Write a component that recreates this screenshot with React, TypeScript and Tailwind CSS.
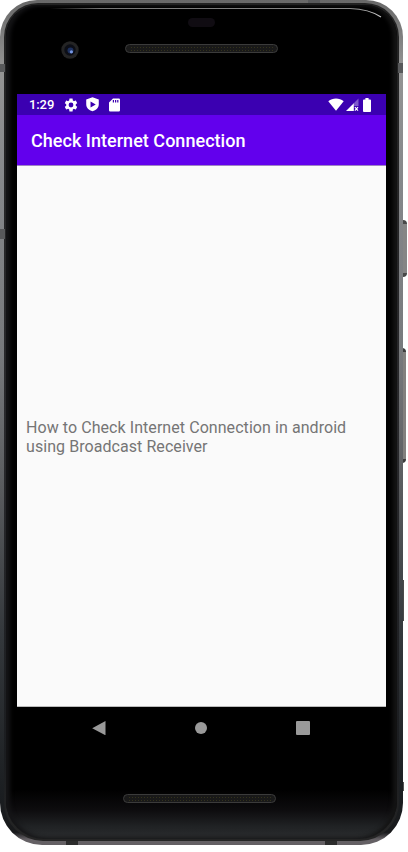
function StatusBar() {
  return (
    <div className="flex h-[21px] shrink-0 items-center bg-[#3b00b1] pl-3 pr-[14px] text-white">
      <span className="w-[26px] text-[13px] leading-[21px] font-medium tracking-[-0.1px] whitespace-nowrap">1:29</span>
      <svg className="ml-2 size-4" viewBox="0 0 24 24" fill="currentColor">
        <path d="M19.14 12.94c.04-.3.06-.61.06-.94 0-.32-.02-.64-.07-.94l2.03-1.58c.18-.14.23-.41.12-.61l-1.92-3.32c-.12-.22-.37-.29-.59-.22l-2.39.96c-.5-.38-1.03-.7-1.62-.94l-.36-2.54c-.04-.24-.24-.41-.48-.41h-3.84c-.24 0-.43.17-.47.41l-.36 2.54c-.59.24-1.13.57-1.62.94l-2.39-.96c-.22-.08-.47 0-.59.22L2.74 8.87c-.12.21-.08.47.12.61l2.03 1.58c-.05.3-.09.63-.09.94s.02.64.07.94l-2.03 1.58c-.18.14-.23.41-.12.61l1.92 3.32c.12.22.37.29.59.22l2.39-.96c.5.38 1.03.7 1.62.94l.36 2.54c.05.24.24.41.48.41h3.84c.24 0 .44-.17.47-.41l.36-2.54c.59-.24 1.13-.56 1.62-.94l2.39.96c.22.08.47 0 .59-.22l1.92-3.32c.12-.22.07-.47-.12-.61zM12 15.6A3.6 3.6 0 1 1 12 8.4a3.6 3.6 0 0 1 0 7.2z" />
      </svg>
      <svg className="ml-[7px] h-[15px] w-[13px]" viewBox="0 0 12 15" preserveAspectRatio="none" fill="currentColor">
        <path fillRule="evenodd" d="M6 0.3 11.8 2.5V7.3C11.8 10.7 9.4 13.4 6 14.3 2.6 13.4.2 10.7.2 7.3V2.5zM4.2 4.4v6L9 7.4z" />
      </svg>
      <svg className="ml-[10px] h-[14px] w-[11px]" viewBox="0 0 11 14" fill="currentColor">
        <path fillRule="evenodd" d="M4 .5h5.8A1.2 1.2 0 0 1 11 1.7v10.6a1.2 1.2 0 0 1-1.2 1.2H1.2A1.2 1.2 0 0 1 0 12.3V4.6zM3.8 2v2.6H5V2zM6 2v2.6h1.2V2zM8.2 2v2.6h1.2V2z" />
      </svg>
      <svg className="ml-auto h-[13px] w-4" viewBox="0 0 16 13" fill="currentColor">
        <path d="M.3 3.2C2.5 1.3 5.2.4 8 .4s5.5.9 7.7 2.8L8 12.8z" />
      </svg>
      <svg className="ml-[2px] h-[13px] w-[13px]" viewBox="0 0 13 13" fill="currentColor">
        <path d="M0 13 7.8 5.2V13z" />
        <path d="M7.8 5.2 12.5.5V8H7.8z" opacity=".35" />
        <path d="m8.9 9.2 3.1 3.4m0-3.4-3.1 3.4" stroke="currentColor" strokeWidth="1.2" />
      </svg>
      <svg className="mr-[1px] ml-[4px] h-[14px] w-2" viewBox="0 0 8 14" fill="currentColor">
        <path d="M2.4 0h3.2v1.4H7a1 1 0 0 1 1 1V13a.9.9 0 0 1-.9.9H.9A.9.9 0 0 1 0 13V2.4a1 1 0 0 1 1-1h1.4z" />
      </svg>
    </div>
  );
}

function Grille() {
  return (
    <div className="flex h-[9px] w-[153px] items-center rounded-full border border-[#3b3b3b] bg-[#191919] px-1">
      <div className="h-[5px] w-full bg-[radial-gradient(#33321c_0.8px,transparent_1px)] bg-[length:3px_3px]" />
    </div>
  );
}

function TopBezel() {
  return (
    <div className="flex h-[89px] shrink-0 flex-col pt-[13px] pl-[55px]">
      <div className="ml-[127px] h-[9px] w-[27px] rounded-full bg-[#100c12]" />
      <div className="mt-[14px] flex items-start gap-[46px]">
        <svg className="size-[18px]" viewBox="0 0 18 18">
          <circle cx="9" cy="9" r="8.7" fill="#242424" />
          <circle cx="9" cy="9" r="5.7" fill="#0c0e16" />
          <circle cx="9.5" cy="9.5" r="3" fill="#1d305e" />
          <circle cx="10.4" cy="10.8" r="1.6" fill="#7898e4" />
        </svg>
        <div className="pt-[3px]"><Grille /></div>
      </div>
    </div>
  );
}

function SideKeys() {
  return (
    <div className="-ml-px flex w-[5px] flex-col items-start">
      <div className="mt-[220px] ml-px h-[57px] w-1 rounded-r-sm border-y-4 border-[#484848] bg-[#858585]" />
      <div className="mt-[71px] h-[115px] w-1 rounded-r-sm border-y-4 border-[#3c3c3c] bg-[#82807e]" />
      <div className="mt-[117px] h-[41px] w-[2px] bg-[#4a4a4a]" />
      <div className="mt-[161px] h-[9px] w-[2px] bg-[#555]" />
    </div>
  );
}

/* Antenna breaks and the highlight along the top of the glass. */
function FrameDetails() {
  return (
    <svg className="absolute inset-0 size-full" viewBox="0 0 403 845" fill="none">
      <defs>
        <linearGradient id="shine" x1="50" x2="383" y1="0" y2="0" gradientUnits="userSpaceOnUse">
          <stop stopColor="#777" stopOpacity="0" />
          <stop offset=".15" stopColor="#777" />
          <stop offset=".9" stopColor="#888" />
          <stop offset="1" stopColor="#ccc" />
        </linearGradient>
      </defs>
      <path d="M50 8.5H350Q369 9 381 17" stroke="url(#shine)" strokeWidth="1.2" />
      <path d="M0 64h5v8H0zM0 229h5v10H0zM398 63h5v10h-5zM308 0h12v3h-12z" fill="#58595b" />
      <path d="M66 841h12v4H66zM325 841h12v4h-12z" fill="#2c2c2c" />
    </svg>
  );
}

export default function App() {
  return (
    <div className="flex h-[852px] w-[408px] overflow-hidden bg-white font-['Roboto',sans-serif]">
      <div className="relative h-[845px] w-[403px] shrink-0 overflow-hidden rounded-t-[37px] rounded-b-[42px] bg-[linear-gradient(to_bottom,#686868_0%,#949494_8%,#85878a_22%,#77797c_42%,#595b5e_58%,#34383c_75%,#1b1e21_94%,#18191b_98.5%,#646064_99.3%)] p-1 pt-[3px]">
        <div className="h-full rounded-t-[34px] rounded-b-[39px] bg-[linear-gradient(to_bottom,#222_0%,#29292c_50%,#1b1d20_90%,#252525_100%)] p-[2px]">
          <div className="flex h-full flex-col rounded-t-[32px] rounded-b-[38px] bg-[linear-gradient(to_bottom,#000_0%,#000_94%,#0d0c0e_96.5%,#202224_98.5%,#2b2d2f_100%)] shadow-[inset_4px_0_4px_#151517,inset_-4px_0_4px_#151515]">
            <TopBezel />
            <div className="ml-[11px] flex h-[613px] w-[369px] shrink-0 flex-col bg-[#fafafa]">
              <StatusBar />
              <header className="flex h-[51px] shrink-0 items-center border-b border-[#9f83c4] bg-[#6200ed] pt-[2px] pl-[14px]">
                <h1 className="text-[18px] leading-6 font-medium tracking-[0.03px] whitespace-nowrap text-white">Check Internet Connection</h1>
              </header>
              <main className="flex grow items-center border-b border-[#bbb] px-[9px] pt-[1px]">
                <p className="text-[16px] leading-[19px] tracking-[0.065px] whitespace-nowrap text-[#757575]">
                  How to Check Internet Connection in android<br />using Broadcast Receiver
                </p>
              </main>
            </div>
            <nav className="ml-[86px] flex h-[42px] w-[218px] shrink-0 items-center justify-between text-[#999]">
              <svg className="size-[14px]" viewBox="0 0 14 14" fill="currentColor"><path d="M13.5 0v14.3L.2 7.2z" /></svg>
              <div className="size-3 rounded-full bg-current" />
              <div className="size-[14px] rounded-[1px] bg-current" />
            </nav>
            <div className="flex justify-center pt-[45px] pr-1"><Grille /></div>
          </div>
        </div>
        <FrameDetails />
      </div>
      <SideKeys />
    </div>
  );
}
